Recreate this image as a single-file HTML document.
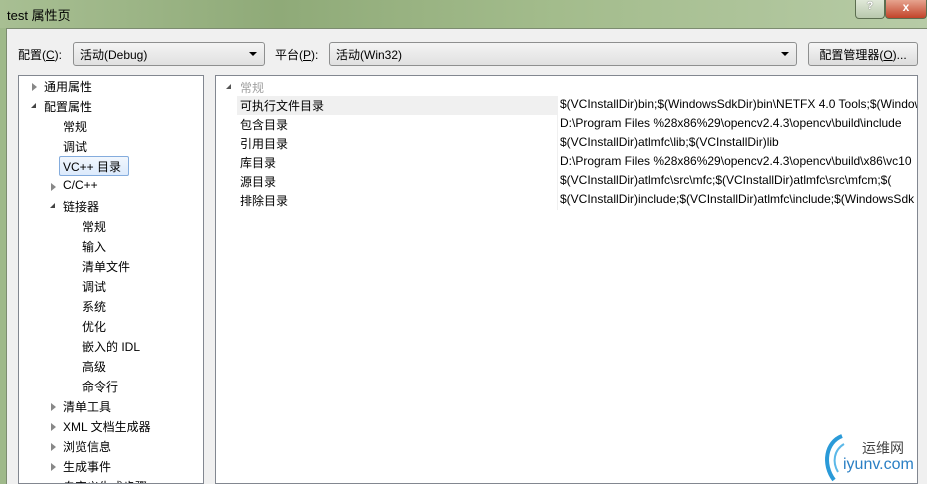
<!DOCTYPE html>
<html><head><meta charset="utf-8"><style>
*{margin:0;padding:0;box-sizing:border-box}
html,body{width:927px;height:484px;overflow:hidden}
body{position:relative;background:#9fb98a;font-family:"Liberation Sans","Noto Sans CJK SC",sans-serif;font-size:12px;color:#000}
.title{position:absolute;left:0;top:0;width:927px;height:28px;background:linear-gradient(90deg,#a8bf93 0%,#8faa78 30%,#a3bc8c 60%,#b7cba6 100%)}
.title span{position:absolute;left:7px;top:5px;font-size:13px}
.btn{position:absolute;top:0;height:19px;border:1px solid #5c6e50;border-top:none;border-radius:0 0 4px 4px}
.body{position:absolute;left:6px;top:28px;width:921px;height:456px;background:#f0f0f0;border-left:1px solid #7c8c70;border-top:1px solid #7c8c70}
.abs{position:absolute}
.combo{position:absolute;height:24px;border:1px solid #8e8f8f;border-radius:3px;background:linear-gradient(#f4f4f4,#e0e0e0);padding:3px 6px}
.arrow{position:absolute;right:7px;top:9px;width:0;height:0;border-left:4px solid transparent;border-right:4px solid transparent;border-top:4px solid #000}
.panel{position:absolute;background:#fff;border:1px solid #828790;overflow:hidden}
.t{position:absolute;white-space:nowrap}
.tri{position:absolute;width:0;height:0;border-top:4px solid transparent;border-bottom:4px solid transparent;border-left:5px solid #888}
.tri2{position:absolute;width:0;height:0;border-left:5px solid transparent;border-bottom:5px solid #444}
.row{position:absolute;left:21px;width:682px;height:19px;border-bottom:1px solid #f0f0f0}
.row .n{position:absolute;left:0;top:0;width:320px;height:19px;padding:1px 3px;background:#fff}
.row .v{position:absolute;left:320px;top:0;width:400px;height:19px;padding:1px 2px;background:#fff;border-left:1px solid #f0f0f0;white-space:nowrap;overflow:hidden}
</style></head><body>
<div class="title"><span>test 属性页</span></div>
<div class="btn" style="left:855px;width:30px;background:linear-gradient(#dfe8d8,#b9c8ad);text-align:center;font-size:11px;color:#fff;font-weight:bold;text-shadow:0 0 1px #333">?</div>
<div class="btn" style="left:885px;width:42px;background:linear-gradient(#e6a48f,#c2442a);text-align:center;color:#fff;font-weight:bold;font-size:12px">x</div>
<div class="body"></div>
<div class="t" style="left:18px;top:46px">配置(<u>C</u>):</div>
<div class="combo" style="left:73px;top:42px;width:192px">活动(Debug)<div class="arrow"></div></div>
<div class="t" style="left:275px;top:46px">平台(<u>P</u>):</div>
<div class="combo" style="left:329px;top:42px;width:468px">活动(Win32)<div class="arrow"></div></div>
<div class="combo" style="left:808px;top:42px;width:110px;text-align:center;background:linear-gradient(#f6f6f6,#dcdcdc)">配置管理器(<u>O</u>)...</div>
<div class="panel" style="left:18px;top:75px;width:186px;height:409px">
<div class="tri" style="left:13px;top:7px"></div><div class="t" style="left:25px;top:2px">通用属性</div>
<div class="tri2" style="left:12px;top:27px"></div><div class="t" style="left:25px;top:22px">配置属性</div>
<div class="t" style="left:44px;top:42px">常规</div>
<div class="t" style="left:44px;top:62px">调试</div>
<div class="abs" style="left:40px;top:80px;width:70px;height:20px;border:1px solid #84acdd;border-radius:2px;background:linear-gradient(#f2f7fd,#dceafc)"></div>
<div class="t" style="left:44px;top:82px">VC++ 目录</div>
<div class="tri" style="left:32px;top:107px"></div><div class="t" style="left:44px;top:102px">C/C++</div>
<div class="tri2" style="left:31px;top:127px"></div><div class="t" style="left:44px;top:122px">链接器</div>
<div class="t" style="left:63px;top:142px">常规</div>
<div class="t" style="left:63px;top:162px">输入</div>
<div class="t" style="left:63px;top:182px">清单文件</div>
<div class="t" style="left:63px;top:202px">调试</div>
<div class="t" style="left:63px;top:222px">系统</div>
<div class="t" style="left:63px;top:242px">优化</div>
<div class="t" style="left:63px;top:262px">嵌入的 IDL</div>
<div class="t" style="left:63px;top:282px">高级</div>
<div class="t" style="left:63px;top:302px">命令行</div>
<div class="tri" style="left:32px;top:327px"></div><div class="t" style="left:44px;top:322px">清单工具</div>
<div class="tri" style="left:32px;top:347px"></div><div class="t" style="left:44px;top:342px">XML 文档生成器</div>
<div class="tri" style="left:32px;top:367px"></div><div class="t" style="left:44px;top:362px">浏览信息</div>
<div class="tri" style="left:32px;top:387px"></div><div class="t" style="left:44px;top:382px">生成事件</div>
<div class="tri" style="left:32px;top:407px"></div><div class="t" style="left:44px;top:402px">自定义生成步骤</div>
</div>
<div class="panel" style="left:215px;top:75px;width:703px;height:409px">
<div class="tri2" style="left:10px;top:8px;border-bottom-color:#555"></div><div class="t" style="left:24px;top:3px;color:#a0a0a0">常规</div>
<div class="row" style="top:20px"><div class="n" style="background:#f0f0f0">可执行文件目录</div><div class="v">$(VCInstallDir)bin;$(WindowsSdkDir)bin\NETFX 4.0 Tools;$(WindowsSdkDir)bin</div></div>
<div class="row" style="top:39px"><div class="n">包含目录</div><div class="v">D:\Program Files %28x86%29\opencv2.4.3\opencv\build\include</div></div>
<div class="row" style="top:58px"><div class="n">引用目录</div><div class="v">$(VCInstallDir)atlmfc\lib;$(VCInstallDir)lib</div></div>
<div class="row" style="top:77px"><div class="n">库目录</div><div class="v">D:\Program Files %28x86%29\opencv2.4.3\opencv\build\x86\vc10</div></div>
<div class="row" style="top:96px"><div class="n">源目录</div><div class="v">$(VCInstallDir)atlmfc\src\mfc;$(VCInstallDir)atlmfc\src\mfcm;$(</div></div>
<div class="row" style="top:115px"><div class="n">排除目录</div><div class="v">$(VCInstallDir)include;$(VCInstallDir)atlmfc\include;$(WindowsSdk</div></div>
</div>
<svg class="abs" style="left:820px;top:432px" width="30" height="52"><path d="M22 4 C6 10 2 32 14 48" stroke="#2a9ad8" stroke-width="4" fill="none"/><path d="M24 12 C14 18 12 30 18 40" stroke="#5bb8e8" stroke-width="2" fill="none"/></svg>
<div class="t" style="left:862px;top:438px;font-size:14px;color:#444">运维网</div>
<div class="t" style="left:843px;top:456px;font-size:16px;color:#2a7fc4">iyunv.com</div>
</body></html>
